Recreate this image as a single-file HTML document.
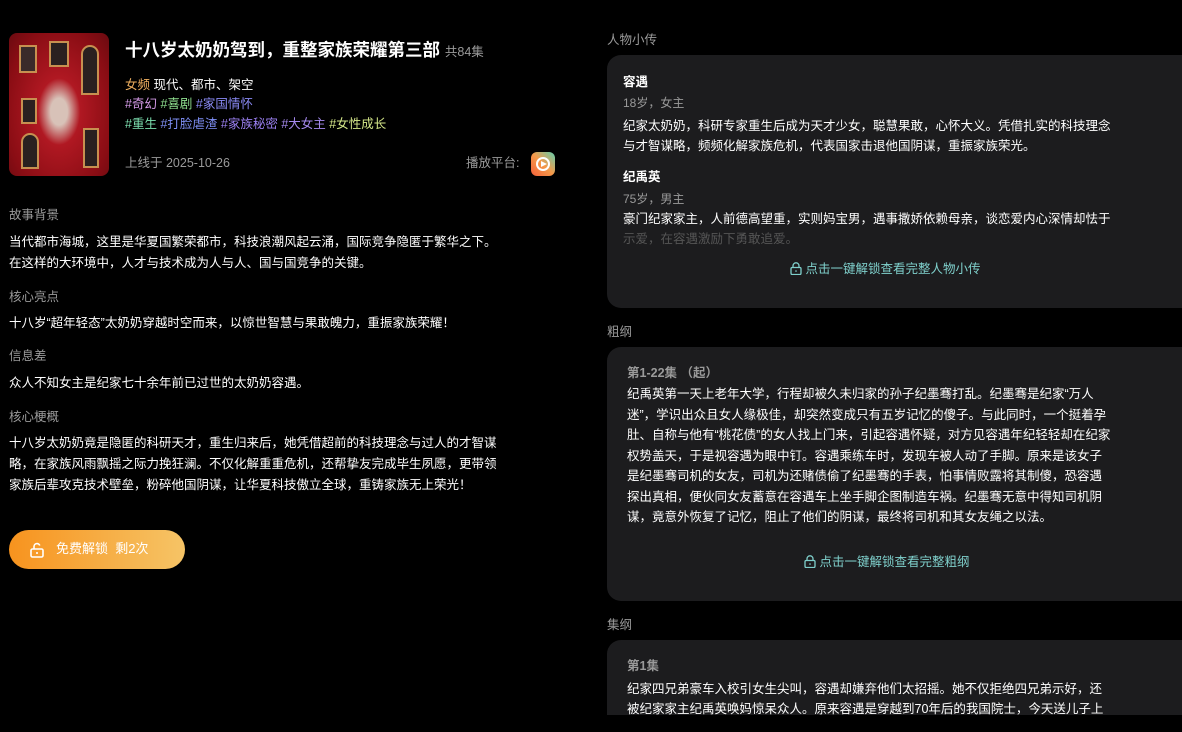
<!DOCTYPE html>
<html><head><meta charset="utf-8"><style>
*{margin:0;padding:0;box-sizing:border-box}
html{width:1182px;height:732px;overflow:hidden;background:#000}
body{width:1182px;height:732px;background:#000;overflow:hidden;position:relative;font-family:"Liberation Sans","Noto Sans CJK SC",sans-serif;color:#fff;font-size:12.5px}
.a{position:absolute;white-space:nowrap;line-height:20px}
.lbl{color:#9a9a9a;font-size:12.5px}
.card{position:absolute;left:607px;width:590px;background:#1c1c1e;border-radius:14px;overflow:hidden}
.g{color:#9a9a9a}
.lk{color:#7fd0cc}
</style></head><body>
<div style="position:absolute;left:9px;top:33px;width:100px;height:143px;border-radius:8px;background:radial-gradient(ellipse at 50% 55%,#d8c2b8 0 12%,#b01822 30%,#8a0d14 75%,#6a0a10);overflow:hidden">
<div style="position:absolute;left:10px;top:12px;width:18px;height:28px;background:#3a2a2a;border:2px solid #c79050"></div>
<div style="position:absolute;left:40px;top:8px;width:20px;height:26px;background:#2a2020;border:2px solid #c79050"></div>
<div style="position:absolute;left:72px;top:12px;width:18px;height:50px;background:#2a2020;border:2px solid #c79050;border-radius:9px 9px 0 0"></div>
<div style="position:absolute;left:12px;top:65px;width:16px;height:26px;background:#2a2020;border:2px solid #c79050"></div>
<div style="position:absolute;left:12px;top:100px;width:18px;height:36px;background:#2a2020;border:2px solid #c79050;border-radius:9px 9px 0 0"></div>
<div style="position:absolute;left:74px;top:95px;width:16px;height:40px;background:#2a2020;border:2px solid #c79050"></div>
</div>
<div class="a" style="left:125px;top:38px;font-size:17.5px;font-weight:bold;line-height:24px">十八岁太奶奶驾到，重整家族荣耀第三部 <span style="font-size:12.5px;font-weight:normal;color:#9a9a9a">共84集</span></div>
<div class="a" style="left:125px;top:75px"><span style="color:#f0b060">女频</span> 现代、都市、架空</div>
<div class="a" style="left:125px;top:94px"><span style="color:#d59be8">#奇幻</span> <span style="color:#8fe08f">#喜剧</span> <span style="color:#8a8af5">#家国情怀</span></div>
<div class="a" style="left:125px;top:114px"><span style="color:#7de0b0">#重生</span> <span style="color:#7f8ff5">#打脸虐渣</span> <span style="color:#9a7ff0">#家族秘密</span> <span style="color:#a68af0">#大女主</span> <span style="color:#d6e88a">#女性成长</span></div>
<div class="a g" style="left:125px;top:153px">上线于 2025-10-26</div>
<div class="a g" style="left:466px;top:153px">播放平台:</div>
<div style="position:absolute;left:531px;top:152px;width:24px;height:24px;border-radius:6px;background:linear-gradient(45deg,#f4603a,#f49a4a 50%,#5fd0b0)">
<div style="position:absolute;left:5px;top:5px;width:14px;height:14px;border:2.5px solid #fff;border-radius:50%"></div>
<div style="position:absolute;left:10px;top:8.5px;width:0;height:0;border-left:6px solid #fff;border-top:3.5px solid transparent;border-bottom:3.5px solid transparent"></div>
</div>

<div class="a lbl" style="left:9px;top:205px">故事背景</div>
<div class="a" style="left:9px;top:232px;line-height:21px">当代都市海城，这里是华夏国繁荣都市，科技浪潮风起云涌，国际竞争隐匿于繁华之下。<br>在这样的大环境中，人才与技术成为人与人、国与国竞争的关键。</div>
<div class="a lbl" style="left:9px;top:287px">核心亮点</div>
<div class="a" style="left:9px;top:313px">十八岁“超年轻态”太奶奶穿越时空而来，以惊世智慧与果敢魄力，重振家族荣耀！</div>
<div class="a lbl" style="left:9px;top:346px">信息差</div>
<div class="a" style="left:9px;top:373px">众人不知女主是纪家七十余年前已过世的太奶奶容遇。</div>
<div class="a lbl" style="left:9px;top:407px">核心梗概</div>
<div class="a" style="left:9px;top:433px;line-height:21px">十八岁太奶奶竟是隐匿的科研天才，重生归来后，她凭借超前的科技理念与过人的才智谋<br>略，在家族风雨飘摇之际力挽狂澜。不仅化解重重危机，还帮挚友完成毕生夙愿，更带领<br>家族后辈攻克技术壁垒，粉碎他国阴谋，让华夏科技傲立全球，重铸家族无上荣光！</div>
<div style="position:absolute;left:9px;top:530px;width:176px;height:39px;border-radius:20px;background:linear-gradient(90deg,#f7931e,#f6c466)">
<svg style="position:absolute;left:20px;top:12px" width="16" height="16" viewBox="0 0 16 16" fill="none" stroke="#fff" stroke-width="1.6"><rect x="2" y="7" width="12" height="8" rx="1.5"/><path d="M5 7V4.5a3 3 0 0 1 5.8-1"/><path d="M8 10v2"/></svg>
<div class="a" style="left:47px;top:9px;font-size:13px">免费解锁&nbsp; 剩2次</div>
</div>

<div class="a lbl" style="left:607px;top:30px">人物小传</div>
<div class="card" style="top:55px;height:253px"></div>
<div class="a" style="left:623px;top:72px;font-weight:bold">容遇</div>
<div class="a g" style="left:623px;top:93px;font-size:12px">18岁，女主</div>
<div class="a" style="left:623px;top:116px">纪家太奶奶，科研专家重生后成为天才少女，聪慧果敢，心怀大义。凭借扎实的科技理念<br>与才智谋略，频频化解家族危机，代表国家击退他国阴谋，重振家族荣光。</div>
<div class="a" style="left:623px;top:167px;font-weight:bold">纪禹英</div>
<div class="a g" style="left:623px;top:189px;font-size:12px">75岁，男主</div>
<div class="a" style="left:623px;top:209px">豪门纪家家主，人前德高望重，实则妈宝男，遇事撒娇依赖母亲，谈恋爱内心深情却怯于<br><span style="color:#555">示爱，在容遇激励下勇敢追爱。</span></div>
<div class="a lk" style="left:790px;top:259px"><svg width="12" height="13" viewBox="0 0 12 13" fill="none" stroke="#7fd0cc" stroke-width="1.3" style="vertical-align:-2px"><rect x="1" y="5.5" width="10" height="7" rx="1.2"/><path d="M3 5.5V3.8a3 3 0 0 1 6 0v1.7"/><path d="M6 8.3v1.5"/></svg> 点击一键解锁查看完整人物小传</div>

<div class="a lbl" style="left:607px;top:322px">粗纲</div>
<div class="card" style="top:347px;height:254px"></div>
<div class="a g" style="left:627px;top:363px;font-weight:bold">第1-22集 （起）</div>
<div class="a" style="left:627px;top:384px;line-height:20.5px">纪禹英第一天上老年大学，行程却被久未归家的孙子纪墨骞打乱。纪墨骞是纪家“万人<br>迷”，学识出众且女人缘极佳，却突然变成只有五岁记忆的傻子。与此同时，一个挺着孕<br>肚、自称与他有“桃花债”的女人找上门来，引起容遇怀疑，对方见容遇年纪轻轻却在纪家<br>权势盖天，于是视容遇为眼中钉。容遇乘练车时，发现车被人动了手脚。原来是该女子<br>是纪墨骞司机的女友，司机为还赌债偷了纪墨骞的手表，怕事情败露将其制傻，恐容遇<br>探出真相，便伙同女友蓄意在容遇车上坐手脚企图制造车祸。纪墨骞无意中得知司机阴<br>谋，竟意外恢复了记忆，阻止了他们的阴谋，最终将司机和其女友绳之以法。</div>
<div class="a lk" style="left:804px;top:552px"><svg width="12" height="13" viewBox="0 0 12 13" fill="none" stroke="#7fd0cc" stroke-width="1.3" style="vertical-align:-2px"><rect x="1" y="5.5" width="10" height="7" rx="1.2"/><path d="M3 5.5V3.8a3 3 0 0 1 6 0v1.7"/><path d="M6 8.3v1.5"/></svg> 点击一键解锁查看完整粗纲</div>

<div class="a lbl" style="left:607px;top:615px">集纲</div>
<div style="position:absolute;left:607px;top:640px;width:590px;height:75px;background:#1c1c1e;border-radius:14px 14px 0 0;overflow:hidden">
<div class="a g" style="left:20px;top:16px;font-weight:bold">第1集</div>
<div class="a" style="left:20px;top:39px">纪家四兄弟豪车入校引女生尖叫，容遇却嫌弃他们太招摇。她不仅拒绝四兄弟示好，还<br>被纪家家主纪禹英唤妈惊呆众人。原来容遇是穿越到70年后的我国院士，今天送儿子上</div>
</div>
</body></html>
